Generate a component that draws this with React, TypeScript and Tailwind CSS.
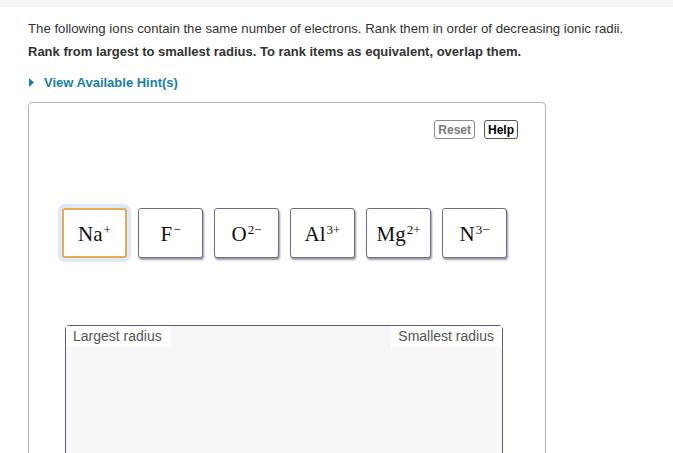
import React from "react";

type Ion = { base: string; sup: string; selected?: boolean };

const ions: Ion[] = [
  { base: "Na", sup: "+", selected: true },
  { base: "F", sup: "−" },
  { base: "O", sup: "2−" },
  { base: "Al", sup: "3+" },
  { base: "Mg", sup: "2+" },
  { base: "N", sup: "3−" },
];

function Chip({ ion }: { ion: Ion }) {
  const border = ion.selected
    ? "border-2 border-[#e3ad55] ring-4 ring-[#dfe8f8]"
    : "border border-[#6e6b8f]";
  return (
    <div
      className={`w-[65px] h-[50px] shrink-0 flex items-center justify-center bg-white rounded-[3px] shadow-[1px_2px_2px_rgba(0,0,0,0.4)] ${border}`}
    >
      <span className="text-[21px] text-[#111] leading-none pt-[3px]" style={{ fontFamily: '"Liberation Serif", "Times New Roman", serif' }}>
        {ion.base}
        <sup className="text-[13px] relative top-[-7px] ml-[1px]">{ion.sup}</sup>
      </span>
    </div>
  );
}

export default function App() {
  return (
    <div
      className="w-[673px] h-[453px] overflow-hidden bg-white text-[#333]"
      style={{ fontFamily: '"Liberation Sans", Arial, sans-serif' }}
    >
      <div className="h-[7px] bg-[#f5f5f5]" />
      <div className="px-[28px]">
        <p className="mt-[14px] text-[13.2px] leading-[15px] whitespace-nowrap">
          The following ions contain the same number of electrons. Rank them in order of decreasing ionic radii.
        </p>
        <p className="mt-[8px] text-[13px] leading-[15px] font-bold whitespace-nowrap">
          Rank from largest to smallest radius. To rank items as equivalent, overlap them.
        </p>
        <div className="mt-[16px] flex items-center h-[15px] text-[13px] font-bold text-[#1a7fa6]">
          <svg width="5" height="9" viewBox="0 0 5 9" className="ml-[1px]">
            <polygon points="0,0 5,4.5 0,9" fill="#1a7fa6" />
          </svg>
          <span className="ml-[10px]">View Available Hint(s)</span>
        </div>

        <div className="mt-[12px] w-[518px] h-[400px] border border-[#b5b5b5] rounded-[4px]">
          <div className="flex justify-end gap-[9px] pt-[17px] pr-[27px]">
            <button className="h-[19px] px-[3px] border border-[#8a8a8a] rounded-[3px] text-[12px] font-bold text-[#7a7a7a] leading-none">
              Reset
            </button>
            <button className="h-[19px] px-[3px] border border-[#555] rounded-[3px] text-[12px] font-bold text-black leading-none">
              Help
            </button>
          </div>

          <div className="mt-[69px] ml-[33px] flex gap-[11px]">
            {ions.map((ion) => (
              <Chip key={ion.base} ion={ion} />
            ))}
          </div>

          <div className="mt-[67px] ml-[36px] w-[438px] h-[200px] border border-[#5c5a7a] rounded-[4px] bg-[#f7f7f7] flex justify-between items-start">
            <div className="bg-white h-[21px] w-[105px] pl-[7px] text-[14px] text-[#555] leading-[20px]">
              Largest radius
            </div>
            <div className="bg-white h-[21px] w-[111px] pr-[8px] text-right text-[14px] text-[#555] leading-[20px]">
              Smallest radius
            </div>
          </div>
        </div>
      </div>
    </div>
  );
}
